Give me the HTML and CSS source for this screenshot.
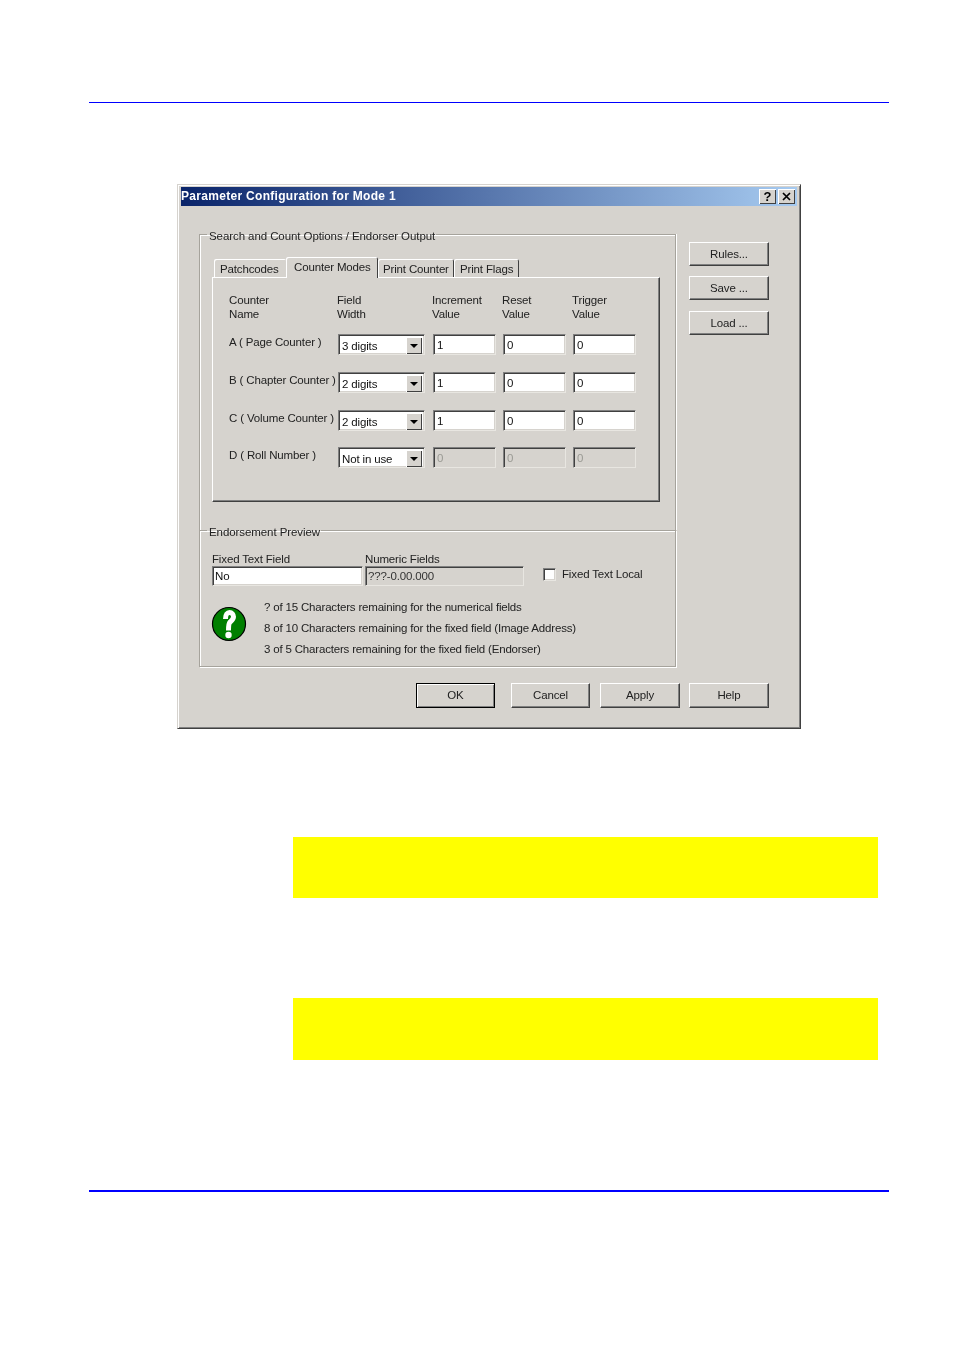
FILE: index.html
```html
<!DOCTYPE html>
<html lang="en">
<head>
<meta charset="utf-8">
<title>Parameter Configuration for Mode 1</title>
<link rel="stylesheet" href="styles.css">
</head>
<body>
<main class="page">
  <hr class="rule top-rule">
  <section class="dialog">
    <header class="titlebar">
      <span class="title">Parameter Configuration for Mode 1</span>
      <div class="caption-btns">
        <span class="cap-btn">?</span>
        <span class="cap-btn">
          <svg width="9" height="9" viewBox="0 0 9 9"><path d="M1 1l7 7M8 1l-7 7" stroke="#000" stroke-width="1.7" fill="none"/></svg>
        </span>
      </div>
    </header>
    <div class="dialog-body">
      <div class="left">
        <fieldset class="group group-a">
          <legend>Search and Count Options / Endorser Output</legend>
          <div class="tabs">
            <span class="tab">Patchcodes</span>
            <span class="tab active">Counter Modes</span>
            <span class="tab">Print Counter</span>
            <span class="tab">Print Flags</span>
          </div>
          <div class="panel">
            <div class="grid-head">
              <span>Counter<br>Name</span>
              <span>Field<br>Width</span>
              <span>Increment<br>Value</span>
              <span>Reset<br>Value</span>
              <span>Trigger<br>Value</span>
            </div>
            <div class="grid-rows">
              <span class="row-label">A ( Page Counter )</span>
              <div class="combo"><span>3 digits</span><i class="arrow"></i></div>
              <div class="field">1</div><div class="field">0</div><div class="field">0</div>

              <span class="row-label">B ( Chapter Counter )</span>
              <div class="combo"><span>2 digits</span><i class="arrow"></i></div>
              <div class="field">1</div><div class="field">0</div><div class="field">0</div>

              <span class="row-label">C ( Volume Counter )</span>
              <div class="combo"><span>2 digits</span><i class="arrow"></i></div>
              <div class="field">1</div><div class="field">0</div><div class="field">0</div>

              <span class="row-label">D ( Roll Number )</span>
              <div class="combo"><span>Not in use</span><i class="arrow"></i></div>
              <div class="field off">0</div><div class="field off">0</div><div class="field off">0</div>
            </div>
          </div>
        </fieldset>
        <fieldset class="group group-b">
          <legend>Endorsement Preview</legend>
          <div class="preview">
            <div class="pv-col pv-fixed">
              <span class="pv-label">Fixed Text Field</span>
              <div class="field">No</div>
            </div>
            <div class="pv-col pv-num">
              <span class="pv-label">Numeric Fields</span>
              <div class="field off num">???-0.00.000</div>
            </div>
            <label class="check"><i class="box"></i><span>Fixed Text Local</span></label>
          </div>
          <div class="status">
            <svg class="help-icon" width="36" height="36" viewBox="0 0 36 36">
              <circle cx="18" cy="18" r="16.500" fill="#007f00" stroke="#000" stroke-width="1.200"/>
              <path d="M14.500 13C14.500 8.500 16.500 6.500 18.500 6.500C21 6.500 22.500 8.500 22.500 10.800C22.500 13.500 20.500 14.800 19 16C18 17 17.500 18 17.500 24.500" fill="none" stroke="#fff" stroke-width="5"/>
              <circle cx="17.500" cy="29" r="3.200" fill="#fff"/>
            </svg>
            <div class="status-lines">
              <p>? of 15 Characters remaining for the numerical fields</p>
              <p>8 of 10 Characters remaining for the fixed field (Image Address)</p>
              <p>3 of 5 Characters remaining for the fixed field (Endorser)</p>
            </div>
          </div>
        </fieldset>
      </div>
      <div class="side">
        <button class="btn">Rules...</button>
        <button class="btn">Save ...</button>
        <button class="btn">Load ...</button>
      </div>
    </div>
    <footer class="actions">
      <button class="btn default">OK</button>
      <button class="btn narrow">Cancel</button>
      <button class="btn">Apply</button>
      <button class="btn last">Help</button>
    </footer>
  </section>
  <div class="note note-a"></div>
  <div class="note note-b"></div>
  <hr class="rule bottom-rule">
</main>
</body>
</html>
```
FILE: styles.css
```css
* { box-sizing: border-box; }
html, body { margin: 0; padding: 0; background: #fff; }
body { width: 954px; height: 1350px; overflow: hidden; }
.page { padding: 102px 0 0 89px; width: 889px; }
.rule { border: 0; margin: 0; background: #0000ff; width: 800px; }
.top-rule { height: 1px; }
.bottom-rule { height: 2px; margin-top: 130px; }

.dialog {
  margin: 81px 0 0 88px;
  width: 624px;
  height: 545px;
  background: #d6d3ce;
  border: 1px solid;
  border-color: #d6d3ce #404040 #404040 #d6d3ce;
  box-shadow: inset 1px 1px 0 #fff, inset -1px -1px 0 #808080;
  padding: 2px 3px 3px;
  font: 11.5px/14px "Liberation Sans", Arial, sans-serif;
  color: #222;
  letter-spacing: -.15px;
  filter: blur(.3px);
}
.titlebar {
  height: 19px;
  display: flex;
  align-items: center;
  justify-content: space-between;
  padding: 0 2px 0 0;
  background: linear-gradient(90deg, #0a246a, #a6caf0);
}
.title { color: #fff; font-size: 12px; font-weight: 700; padding: 0 0 1px; letter-spacing: .3px; }
.caption-btns { display: flex; gap: 2px; }
.cap-btn {
  width: 17px; height: 15px;
  display: flex; align-items: center; justify-content: center;
  background: #d6d3ce;
  font-weight: 700; color: #000; font-size: 13px;
  box-shadow: inset 1px 1px 0 #fff, inset -1px -1px 0 #404040;
}

.dialog-body { display: flex; align-items: flex-start; padding: 28px 0 0 18px; }
.left { width: 477px; }
.group {
  margin: 0; padding: 0; min-width: 0;
  border: 1px solid #a6a39c;
  box-shadow: 1px 1px 0 #fff, inset 1px 1px 0 #fff;
}
.group legend { margin-left: -5px; padding: 0 1px 0 2px; line-height: 14px; position: relative; top: 2px; letter-spacing: -.08px; }
.group-a { border-bottom: 0; height: 303px; box-shadow: inset 1px 1px 0 #fff, 1px 0 0 #fff; padding: 15px 15px 0 12px; margin-top: -7px; }
.group-b { height: 144px; padding: 15px 0 0 12px; margin-top: -7px; }

.tabs { display: flex; align-items: flex-end; height: 21px; padding-left: 2px; }
.tab {
  height: 18px;
  padding: 3px 5px 0 6px;
  background: #d6d3ce;
  border-radius: 2px 2px 0 0;
  box-shadow: inset 1px 1px 0 #fff, inset -1px 0 0 #404040;
  white-space: nowrap;
}
.tab:nth-child(1) { width: 72px; box-shadow: inset 1px 1px 0 #fff; }
.tab.active {
  width: 92px; height: 21px;
  padding: 3px 0 0 8px;
  position: relative;
  margin-bottom: -1px;
  z-index: 1;
}
.tab:nth-child(3) { width: 76px; padding-left: 5px; }
.tab:nth-child(4) { width: 65px; }

.panel {
  width: 448px;
  height: 225px;
  padding: 15px 0 0 16px;
  border: 1px solid;
  border-color: #fff #404040 #404040 #fff;
  box-shadow: inset -1px -1px 0 #808080;
}
.grid-head {
  display: grid;
  grid-template-columns: 108px 95px 70px 70px 70px;
  line-height: 14px;
  height: 41px;
}
.grid-rows {
  display: grid;
  grid-template-columns: 109px 87px 71px 70px 70px;
  grid-template-rows: 21px 21px 20px 21px;
  row-gap: 17px;
}
.row-label { white-space: nowrap; line-height: 14px; margin-top: 1px; }
.grid-rows .field { margin-left: 8px; width: 63px; }
.grid-rows .field + .field { margin-left: 7px; }

.field, .combo {
  height: 21px;
  background: #fff;
  border: 1px solid;
  border-color: #808080 #e8e6e1 #e8e6e1 #808080;
  box-shadow: inset 1px 1px 0 #404040, inset -1px -1px 0 #d6d3ce;
  padding: 3px 0 0 3px;
  color: #111;
}
.field.off { background: #d6d3ce; color: #9a9a94; }
.field.off.num { color: #333; }
.combo { display: flex; justify-content: space-between; padding: 4px 1px 0 3px; position: relative; }
.arrow {
  position: absolute; right: 2px; top: 2px;
  width: 16px; height: 17px;
  background: #d6d3ce;
  box-shadow: inset 1px 1px 0 #fff, inset -1px -1px 0 #404040;
}
.arrow::after {
  content: "";
  position: absolute; left: 4px; top: 7px;
  border: 4px solid transparent;
  border-top-color: #000;
  border-bottom: 0;
}

.preview { display: flex; align-items: flex-start; }
.pv-col { display: flex; flex-direction: column; }
.pv-label { height: 14px; line-height: 14px; }
.pv-fixed { width: 153px; }
.pv-fixed .field { width: 151px; height: 20px; padding: 2px 0 0 2px; }
.pv-num { width: 178px; }
.pv-num .field { width: 159px; height: 20px; padding: 2px 0 0 2px; }
.check { display: flex; align-items: center; gap: 6px; margin-top: 15px; height: 14px; }
.box {
  width: 13px; height: 13px;
  background: #fff;
  border: 1px solid;
  border-color: #808080 #e8e6e1 #e8e6e1 #808080;
  box-shadow: inset 1px 1px 0 #404040, inset -1px -1px 0 #d6d3ce;
}
.status { display: flex; align-items: flex-start; gap: 17px; margin-top: 20px; margin-left: -1px; }
.help-icon { flex: none; display: block; }
.status-lines { margin-top: -9px; letter-spacing: -.18px; }
.status-lines p { margin: 0; height: 21px; line-height: 21px; white-space: nowrap; }

.side { display: flex; flex-direction: column; margin: 8px 0 0 13px; }
.btn {
  width: 80px; height: 25px;
  padding: 0;
  font: inherit; letter-spacing: inherit; color: #222;
  background: #d6d3ce;
  border: 1px solid;
  border-color: #fff #404040 #404040 #fff;
  box-shadow: inset -1px -1px 0 #808080;
}
.side .btn { height: 24px; margin-bottom: 10px; }
.side .btn:nth-child(2) { margin-bottom: 11px; }
.actions { display: flex; justify-content: flex-end; gap: 10px; margin-top: 16px; padding-right: 28px; }
.actions .btn { padding-bottom: 2px; }
.btn.default { width: 79px; border: 1px solid #000; box-shadow: inset 1px 1px 0 #fff, inset -1px -1px 0 #808080; margin-right: 6px; }
.btn.narrow { width: 79px; }
.btn.last { margin-left: -1px; }

.note { background: #ffff00; width: 585px; margin-left: 204px; }
.note-a { height: 61px; margin-top: 108px; }
.note-b { height: 62px; margin-top: 100px; }
```
